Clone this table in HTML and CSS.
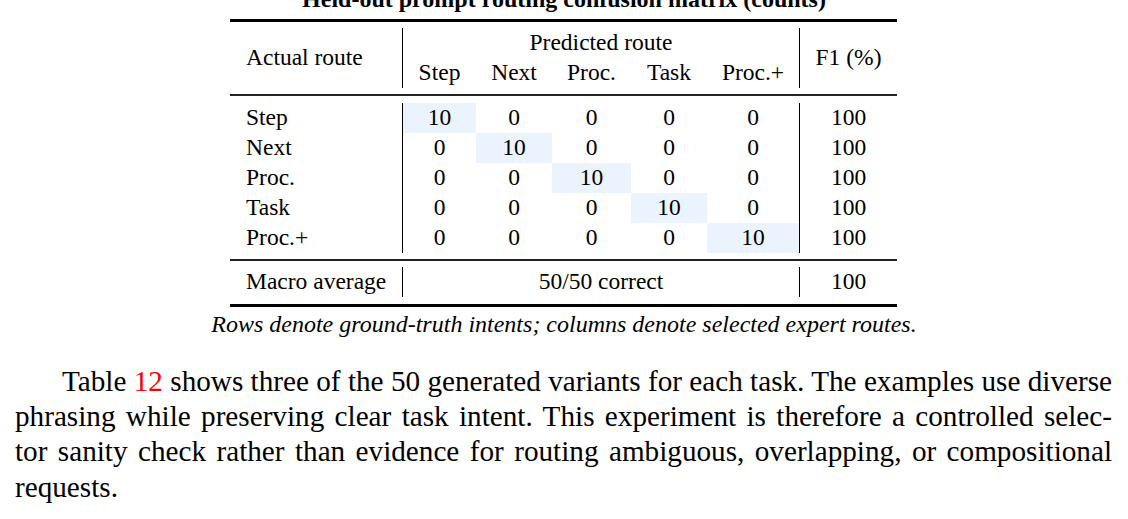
FILE: index.html
```html
<!DOCTYPE html>
<html lang="en">
<head>
<meta charset="utf-8">
<title>Confusion matrix</title>
<link rel="stylesheet" href="styles.css">
</head>
<body>
<div class="page">
  <div class="title">Held-out prompt routing confusion matrix (counts)</div>
  <div class="tbl">
    <div class="sec head">
      <div class="c lab span2">Actual route</div>
      <div class="vl span2"></div>
      <div class="c predicted">Predicted route</div>
      <div class="vl span2 vr"></div>
      <div class="c f1 span2">F1 (%)</div>
      <div class="c n col3">Step</div>
      <div class="c n">Next</div>
      <div class="c n">Proc.</div>
      <div class="c n">Task</div>
      <div class="c n">Proc.+</div>
    </div>
    <div class="sec body">
      <div class="c lab">Step</div><div class="vl span5"></div>
      <div class="c n hl">10</div><div class="c n">0</div><div class="c n">0</div><div class="c n">0</div><div class="c n">0</div>
      <div class="vl span5"></div><div class="c f1">100</div>

      <div class="c lab">Next</div>
      <div class="c n col3">0</div><div class="c n hl">10</div><div class="c n">0</div><div class="c n">0</div><div class="c n">0</div>
      <div class="c f1 col9">100</div>

      <div class="c lab">Proc.</div>
      <div class="c n col3">0</div><div class="c n">0</div><div class="c n hl">10</div><div class="c n">0</div><div class="c n">0</div>
      <div class="c f1 col9">100</div>

      <div class="c lab">Task</div>
      <div class="c n col3">0</div><div class="c n">0</div><div class="c n">0</div><div class="c n hl">10</div><div class="c n">0</div>
      <div class="c f1 col9">100</div>

      <div class="c lab">Proc.+</div>
      <div class="c n col3">0</div><div class="c n">0</div><div class="c n">0</div><div class="c n">0</div><div class="c n hl">10</div>
      <div class="c f1 col9">100</div>
    </div>
    <div class="sec foot">
      <div class="c lab">Macro average</div>
      <div class="vl"></div>
      <div class="c predicted">50/50 correct</div>
      <div class="vl"></div>
      <div class="c f1">100</div>
    </div>
  </div>
  <div class="caption">Rows denote ground-truth intents; columns denote selected expert routes.</div>
  <div class="para">
    <span class="ln first">Table <span class="ref">12</span> shows three of the 50 generated variants for each task. The examples use diverse</span>
    <span class="ln">phrasing while preserving clear task intent. This experiment is therefore a controlled selec-</span>
    <span class="ln">tor sanity check rather than evidence for routing ambiguous, overlapping, or compositional</span>
    <span class="ln last">requests.</span>
  </div>
</div>
</body>
</html>
```

FILE: styles.css
```css
html, body {
  margin: 0;
  padding: 0;
  background: #fff;
}
body {
  font-family: "Liberation Serif", "Times New Roman", serif;
  color: #000;
  overflow: hidden;
}
.page {
  width: 1128px;
  height: 519px;
  position: relative;
}
.title {
  font-weight: bold;
  font-size: 24px;
  line-height: 24px;
  text-align: center;
  margin-top: -13px;
  height: 32px;
}
.tbl {
  width: 667px;
  margin-left: 230px;
  border-top: 3px solid #000;
  border-bottom: 3px solid #000;
  font-size: 23.5px;
}
.sec {
  display: grid;
  grid-template-columns: 172px 1px 73px 76px 79px 76px 92px 1px 97px;
}
.head {
  grid-template-rows: 30px 30px;
  padding: 6px 0 6px;
  border-bottom: 2px solid #222;
}
.body {
  grid-template-rows: repeat(5, 30px);
  padding: 7px 0 6px;
  border-bottom: 2px solid #222;
}
.foot {
  grid-template-rows: 30px;
  padding: 6px 0 7px;
}
.c {
  display: flex;
  align-items: center;
  justify-content: center;
  white-space: nowrap;
  line-height: 1;
}
.lab {
  grid-column: 1;
  justify-content: flex-start;
  padding-left: 16px;
}
.vl {
  background: #000;
  width: 1px;
}
.head .vl { grid-column: 2; grid-row: 1 / span 2; }
.head .vl.vr { grid-column: 8; }
.span2 { grid-row: 1 / span 2; }
.span5 { grid-row: 1 / span 5; }
.body .vl { grid-column: 2; }
.body .vl + .c + .c + .c + .c + .c + .vl { grid-column: 8; }
.predicted { grid-column: 3 / span 5; }
.f1 { grid-column: 9; }
.col3 { grid-column: 3; }
.col9 { grid-column: 9; }
.head .n { grid-row: 2; }
.head .predicted { grid-row: 1; }
.hl { background: #ebf3fe; }
.caption {
  font-style: italic;
  font-size: 24px;
  text-align: center;
  line-height: 26px;
  margin-top: 4px;
}
.para {
  margin-top: 27px;
  margin-left: 15px;
  width: 1097px;
  font-size: 29.2px;
  line-height: 35.2px;
}
.ln {
  display: block;
  text-align: justify;
  text-align-last: justify;
  white-space: nowrap;
}
.ln.first { text-indent: 47px; }
.ln.last { text-align-last: left; }
.ref { color: #f00; }
```
